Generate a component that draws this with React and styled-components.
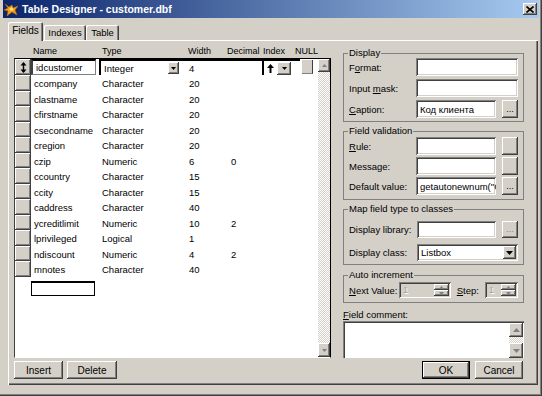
import React from "react";
import styled, { createGlobalStyle, css } from "styled-components";

const face = "#d4d0c8";

const GlobalStyle = createGlobalStyle`
  html, body { margin: 0; padding: 0; background: ${face}; }
  body {
    font-family: "Liberation Sans", Arial, sans-serif;
    font-size: 9px;
    color: #000;
  }
  * { box-sizing: border-box; }
`;

const raised = css`
  background: ${face};
  box-shadow: inset -1px -1px #404040, inset 1px 1px #fff,
    inset -2px -2px #808080;
`;

const sunken = css`
  box-shadow: inset 1px 1px #808080, inset -1px -1px #fff,
    inset 2px 2px #404040, inset -2px -2px ${face};
`;

const checker = css`
  background-color: #fff;
  background-image: repeating-conic-gradient(${face} 0 25%, #fff 0 50%);
  background-size: 2px 2px;
`;

const fields = [
  ["idcustomer", "Integer", "4", ""],
  ["ccompany", "Character", "20", ""],
  ["clastname", "Character", "20", ""],
  ["cfirstname", "Character", "20", ""],
  ["csecondname", "Character", "20", ""],
  ["cregion", "Character", "20", ""],
  ["czip", "Numeric", "6", "0"],
  ["ccountry", "Character", "15", ""],
  ["ccity", "Character", "15", ""],
  ["caddress", "Character", "40", ""],
  ["ycreditlimit", "Numeric", "10", "2"],
  ["lprivileged", "Logical", "1", ""],
  ["ndiscount", "Numeric", "4", "2"],
  ["mnotes", "Character", "40", ""],
];

const Window = styled.div`
  width: 542px;
  height: 396px;
  padding: 0 3px 3px 3px;
  display: flex;
  flex-direction: column;
  background: ${face};
  box-shadow: inset -1px -1px #404040, inset -2px -2px #808080;
`;

const TitleBar = styled.div`
  height: 18px;
  flex: none;
  display: flex;
  align-items: center;
  padding: 0 2px 0 1px;
  background: linear-gradient(to right, #0a246a, #a6caf0);
`;

const TitleText = styled.span`
  margin-left: 3px;
  flex: 1;
  color: #fff;
  font-weight: bold;
  font-size: 10.5px;
`;

const CloseButton = styled.div`
  ${raised};
  width: 14px;
  height: 12px;
  display: flex;
  align-items: center;
  justify-content: center;
`;

const Body = styled.div`
  flex: 1;
  padding: 4px 1px 0 5px;
`;

const TabStrip = styled.div`
  height: 18px;
  display: flex;
  align-items: flex-end;
`;

const Tab = styled.div`
  position: relative;
  z-index: 1;
  width: ${(p) => p.$w}px;
  height: ${(p) => (p.$active ? 19 : 15)}px;
  margin-bottom: ${(p) => (p.$active ? -1 : 0)}px;
  margin-right: ${(p) => (p.$active ? 1 : 0)}px;
  display: flex;
  align-items: center;
  justify-content: center;
  padding-bottom: ${(p) => (p.$active ? 2 : 0)}px;
  font-size: ${(p) => (p.$active ? 10 : 9.5)}px;
  background: ${face};
  border-radius: 2px 2px 0 0;
  box-shadow: inset 1px 1px #fff, inset -1px 0 #404040, inset -2px 0 #808080;
`;

const Panel = styled.div`
  width: 530px;
  height: 345px;
  padding: 4px 6px 6px 6px;
  display: flex;
  gap: 12px;
  box-shadow: inset 1px 1px #fff, inset -1px -1px #404040,
    inset -2px -2px #808080;
`;

const LeftColumn = styled.div`
  width: 317px;
  display: flex;
  flex-direction: column;
`;

const HeaderRow = styled.div`
  height: 14px;
  margin-left: 1px;
  display: grid;
  grid-template-columns: 18px 69px 86px 39px 36px 32px 1fr;
  align-items: center;
  white-space: nowrap;
`;

const Grid = styled.div`
  height: 300px;
  display: flex;
  border-top: 1px solid #000;
  border-left: 1px solid #404040;
  border-right: 1px solid #000;
  border-bottom: 1px solid #fff;
`;

const GridRows = styled.div`
  flex: 1;
  background: #fff;
  display: flex;
  flex-direction: column;
`;

const Row = styled.div`
  height: ${(p) => p.$h}px;
  display: grid;
  grid-template-columns: 16px 68px 84px 42px 37px 38px 18px;
  align-items: stretch;
`;

const Selector = styled.div`
  ${raised};
  display: flex;
  align-items: center;
  justify-content: center;
`;

const Cell = styled.div`
  display: flex;
  align-items: center;
  padding-left: ${(p) => p.$pad || 3}px;
  padding-top: 1px;
  white-space: nowrap;
  overflow: hidden;
  font-size: 9.5px;
`;

const NameEdit = styled.div`
  margin: 0 3px 0 0;
  display: flex;
  align-items: center;
  padding-left: 3px;
  font-size: 9.5px;
  border-top: 2px solid #000;
  border-left: 2px solid #404040;
  border-bottom: 1px solid #808080;
  border-right: 1px solid #808080;
`;

const TypeCombo = styled.div`
  display: flex;
  align-items: center;
  padding: 0 4px 0 3px;
  font-size: 9.5px;
  border-top: 2px solid #000;
  border-left: 2px solid #000;
`;

const ComboText = styled.span`
  flex: 1;
`;

const DropButton = styled.div`
  ${raised};
  width: ${(p) => p.$w || 12}px;
  height: ${(p) => p.$h || 13}px;
  display: flex;
  align-items: center;
  justify-content: center;
`;

const TopLined = styled(Cell)`
  border-top: 2px solid #000;
`;

const IndexCell = styled.div`
  display: flex;
  align-items: center;
  gap: 3px;
  padding-left: 3px;
  border-top: 2px solid #000;
  border-left: 2px solid #000;
`;

const NullCell = styled.div`
  display: flex;
  align-items: center;
  justify-content: center;
`;

const NullBox = styled.div`
  width: 11px;
  height: 14px;
  margin-right: 4px;
  background: ${face};
  border-right: 1px solid #404040;
  border-bottom: 1px solid #808080;
`;

const NewRowEdit = styled.div`
  width: 64px;
  height: 15px;
  margin: 4px 0 0 16px;
  border: 1px solid #000;
  border-top-width: 2px;
`;

const ScrollBar = styled.div`
  width: ${(p) => p.$w || 12}px;
  display: flex;
  flex-direction: column;
`;

const ScrollButton = styled.div`
  ${raised};
  height: ${(p) => p.$h}px;
  display: flex;
  align-items: center;
  justify-content: center;
`;

const ScrollTrack = styled.div`
  flex: 1;
  ${checker};
`;

const ButtonBar = styled.div`
  display: flex;
  gap: ${(p) => p.$gap || 4}px;
  margin-top: 3px;
  justify-content: ${(p) => (p.$right ? "flex-end" : "flex-start")};
  padding-right: ${(p) => (p.$right ? 1 : 0)}px;
`;

const PushButton = styled.div`
  ${raised};
  width: ${(p) => p.$w || 49}px;
  height: 18px;
  display: flex;
  align-items: center;
  justify-content: center;
  font-size: 10px;
  ${(p) =>
    p.$default &&
    css`
      box-shadow: inset 0 0 0 1px #000, inset -2px -2px #404040,
        inset 2px 2px #fff, inset -3px -3px #808080;
    `}
`;

const RightColumn = styled.div`
  width: 181px;
  display: flex;
  flex-direction: column;
  padding-top: 4px;
`;

const Group = styled.fieldset`
  margin: ${(p) => p.$mt || 0}px 0 0 0;
  padding: ${(p) => p.$pt || 0}px 5px ${(p) => p.$pb || 3}px 5px;
  min-inline-size: 0;
  border: 1px solid #808080;
  display: flex;
  flex-direction: column;
  gap: ${(p) => p.$gap || 3}px;
`;

const Legend = styled.legend`
  padding: 0 1px;
  margin-left: -1px;
  height: 10px;
  line-height: 10px;
  font-size: 9.5px;
`;

const FormRow = styled.div`
  height: ${(p) => p.$h || 18}px;
  display: flex;
  align-items: center;
`;

const Label = styled.span`
  width: ${(p) => p.$w || 67}px;
  flex: none;
  white-space: nowrap;
  font-size: 9.5px;
`;

const TextBox = styled.div`
  flex: 1;
  min-width: 0;
  height: 100%;
  display: flex;
  align-items: center;
  padding: 0 4px;
  background: #fff;
  overflow: hidden;
  white-space: nowrap;
  font-size: 9.5px;
  ${sunken};
`;

const Ellipsis = styled.div`
  ${raised};
  flex: none;
  width: 16px;
  height: 100%;
  margin-left: 6px;
  display: flex;
  align-items: flex-end;
  justify-content: center;
  padding-bottom: 4px;
  color: ${(p) => (p.$disabled ? "#808080" : "#000")};
`;

const ComboBox = styled(TextBox)`
  padding-right: 2px;
`;

const Spinner = styled.div`
  width: ${(p) => p.$w}px;
  height: 16px;
  display: flex;
  align-items: center;
  padding: 2px 2px 2px 4px;
  color: #a0a0a0;
  ${sunken};
`;

const SpinText = styled.span`
  flex: 1;
  text-shadow: 1px 1px #fff;
`;

const SpinButtons = styled.div`
  width: 15px;
  height: 100%;
  display: flex;
  flex-direction: column;
`;

const SpinHalf = styled.div`
  ${raised};
  flex: 1;
  display: flex;
  align-items: center;
  justify-content: center;
`;

const StepLabel = styled.span`
  margin: 0 6px 0 6px;
  font-size: 9.5px;
`;

const CommentLabel = styled.div`
  margin-top: 6px;
  height: 11px;
  line-height: 11px;
  font-size: 9.5px;
`;

const CommentBox = styled.div`
  flex: 1;
  margin-top: 1px;
  display: flex;
  justify-content: flex-end;
  padding: 2px 1px 0 2px;
  background: #fff;
  box-shadow: inset 1px 1px #808080, inset 2px 2px #404040;
`;

const Triangle = ({ up, color = "#000" }) => (
  <svg width="7" height="4" viewBox="0 0 7 4">
    <polygon points={up ? "0,4 7,4 3.5,0" : "0,0 7,0 3.5,4"} fill={color} />
  </svg>
);

const SmallTriangle = ({ up, color = "#000" }) => (
  <svg width="5" height="3" viewBox="0 0 5 3">
    <polygon points={up ? "0,3 5,3 2.5,0" : "0,0 5,0 2.5,3"} fill={color} />
  </svg>
);

const FoxIcon = () => (
  <svg width="15" height="15" viewBox="0 0 15 15">
    <polygon
      points="1,2 5,5 8,3 9,6 14,4 11,8 13,13 8,10 3,14 4,9 0,8 4,6"
      fill="#f0a020"
      stroke="#c06010"
      strokeWidth="0.6"
    />
    <polygon points="5,7 8,5 10,8 7,9" fill="#ffe060" />
  </svg>
);

const CloseGlyph = () => (
  <svg width="8" height="7" viewBox="0 0 8 7">
    <path d="M0.5 0.5 L7.5 6.5 M7.5 0.5 L0.5 6.5" stroke="#000" strokeWidth="1.6" />
  </svg>
);

const MoveGlyph = () => (
  <svg width="7" height="11" viewBox="0 0 7 11">
    <path d="M3.5 1 V10" stroke="#000" strokeWidth="1.4" />
    <polygon points="0.5,3.5 6.5,3.5 3.5,0" fill="#000" />
    <polygon points="0.5,7.5 6.5,7.5 3.5,11" fill="#000" />
  </svg>
);

const UpArrow = () => (
  <svg width="7" height="9" viewBox="0 0 7 9">
    <path d="M3.5 3 V9" stroke="#000" strokeWidth="2" />
    <polygon points="0,4 7,4 3.5,0" fill="#000" />
  </svg>
);

const SpinBox = ({ w }) => (
  <Spinner $w={w}>
    <SpinText>1</SpinText>
    <SpinButtons>
      <SpinHalf>
        <SmallTriangle up color="#808080" />
      </SpinHalf>
      <SpinHalf>
        <SmallTriangle color="#808080" />
      </SpinHalf>
    </SpinButtons>
  </Spinner>
);

const FieldRow = ({ field, index }) => {
  const [name, type, width, decimal] = field;
  const h = index === 0 ? 16 : index % 2 ? 16 : 15;
  if (index === 0) {
    return (
      <Row $h={h}>
        <Selector>
          <MoveGlyph />
        </Selector>
        <NameEdit>{name}</NameEdit>
        <TypeCombo>
          <ComboText>{type}</ComboText>
          <DropButton $w={11} $h={12}>
            <SmallTriangle />
          </DropButton>
        </TypeCombo>
        <TopLined $pad={6}>{width}</TopLined>
        <TopLined $pad={6}>{decimal}</TopLined>
        <IndexCell>
          <UpArrow />
          <DropButton $w={14} $h={13}>
            <SmallTriangle />
          </DropButton>
        </IndexCell>
        <NullCell>
          <NullBox />
        </NullCell>
      </Row>
    );
  }
  return (
    <Row $h={h}>
      <Selector />
      <Cell>{name}</Cell>
      <Cell>{type}</Cell>
      <Cell $pad={6}>{width}</Cell>
      <Cell $pad={6}>{decimal}</Cell>
      <Cell />
      <Cell />
    </Row>
  );
};

const App = () => {
  return (
    <>
      <GlobalStyle />
      <Window>
        <TitleBar>
          <FoxIcon />
          <TitleText>Table Designer - customer.dbf</TitleText>
          <CloseButton>
            <CloseGlyph />
          </CloseButton>
        </TitleBar>
        <Body>
          <TabStrip>
            <Tab $active $w={35}>Fields</Tab>
            <Tab $w={42}>Indexes</Tab>
            <Tab $w={33}>Table</Tab>
          </TabStrip>
          <Panel>
            <LeftColumn>
              <HeaderRow>
                <span />
                <span>Name</span>
                <span>Type</span>
                <span>Width</span>
                <span>Decimal</span>
                <span>Index</span>
                <span>NULL</span>
              </HeaderRow>
              <Grid>
                <GridRows>
                  {fields.map((f, i) => (
                    <FieldRow key={f[0]} field={f} index={i} />
                  ))}
                  <NewRowEdit />
                </GridRows>
                <ScrollBar>
                  <ScrollButton $h={13}>
                    <SmallTriangle up color="#808080" />
                  </ScrollButton>
                  <ScrollTrack />
                  <ScrollButton $h={14}>
                    <SmallTriangle color="#808080" />
                  </ScrollButton>
                </ScrollBar>
              </Grid>
              <ButtonBar>
                <PushButton>Insert</PushButton>
                <PushButton $w={50}>Delete</PushButton>
              </ButtonBar>
            </LeftColumn>

            <RightColumn>
              <Group $pb={3}>
                <Legend>Display</Legend>
                <FormRow>
                  <Label>
                    F<u>o</u>rmat:
                  </Label>
                  <TextBox />
                </FormRow>
                <FormRow>
                  <Label>
                    Input <u>m</u>ask:
                  </Label>
                  <TextBox />
                </FormRow>
                <FormRow>
                  <Label>
                    <u>C</u>aption:
                  </Label>
                  <TextBox>Код клиента</TextBox>
                  <Ellipsis>...</Ellipsis>
                </FormRow>
              </Group>

              <Group $mt={4} $pt={1} $pb={4} $gap={2}>
                <Legend>Field validation</Legend>
                <FormRow>
                  <Label>
                    <u>R</u>ule:
                  </Label>
                  <TextBox />
                  <Ellipsis />
                </FormRow>
                <FormRow>
                  <Label>Message:</Label>
                  <TextBox />
                  <Ellipsis />
                </FormRow>
                <FormRow>
                  <Label>Default value:</Label>
                  <TextBox>getautonewnum("Customer")</TextBox>
                  <Ellipsis>...</Ellipsis>
                </FormRow>
              </Group>

              <Group $mt={4} $pt={7} $pb={3} $gap={6}>
                <Legend>Map field type to classes</Legend>
                <FormRow $h={17}>
                  <Label $w={68}>Display library:</Label>
                  <TextBox />
                  <Ellipsis $disabled>...</Ellipsis>
                </FormRow>
                <FormRow $h={17}>
                  <Label $w={68}>Display class:</Label>
                  <ComboBox>
                    <ComboText>Listbox</ComboText>
                    <DropButton $w={13} $h={13}>
                      <Triangle />
                    </DropButton>
                  </ComboBox>
                </FormRow>
              </Group>

              <Group $mt={5} $pt={2} $pb={4}>
                <Legend>Auto increment</Legend>
                <FormRow $h={16}>
                  <Label $w={50}>
                    <u>N</u>ext Value:
                  </Label>
                  <SpinBox w={55} />
                  <StepLabel>
                    <u>S</u>tep:
                  </StepLabel>
                  <SpinBox w={35} />
                </FormRow>
              </Group>

              <CommentLabel>
                <u>F</u>ield comment:
              </CommentLabel>
              <CommentBox>
                <ScrollBar $w={14}>
                  <ScrollButton $h={14}>
                    <Triangle up color="#808080" />
                  </ScrollButton>
                  <ScrollTrack />
                  <ScrollButton $h={15}>
                    <Triangle color="#808080" />
                  </ScrollButton>
                </ScrollBar>
              </CommentBox>
              <ButtonBar $right $gap={5}>
                <PushButton $default $w={48}>
                  OK
                </PushButton>
                <PushButton $w={48}>Cancel</PushButton>
              </ButtonBar>
            </RightColumn>
          </Panel>
        </Body>
      </Window>
    </>
  );
};

export default App;
